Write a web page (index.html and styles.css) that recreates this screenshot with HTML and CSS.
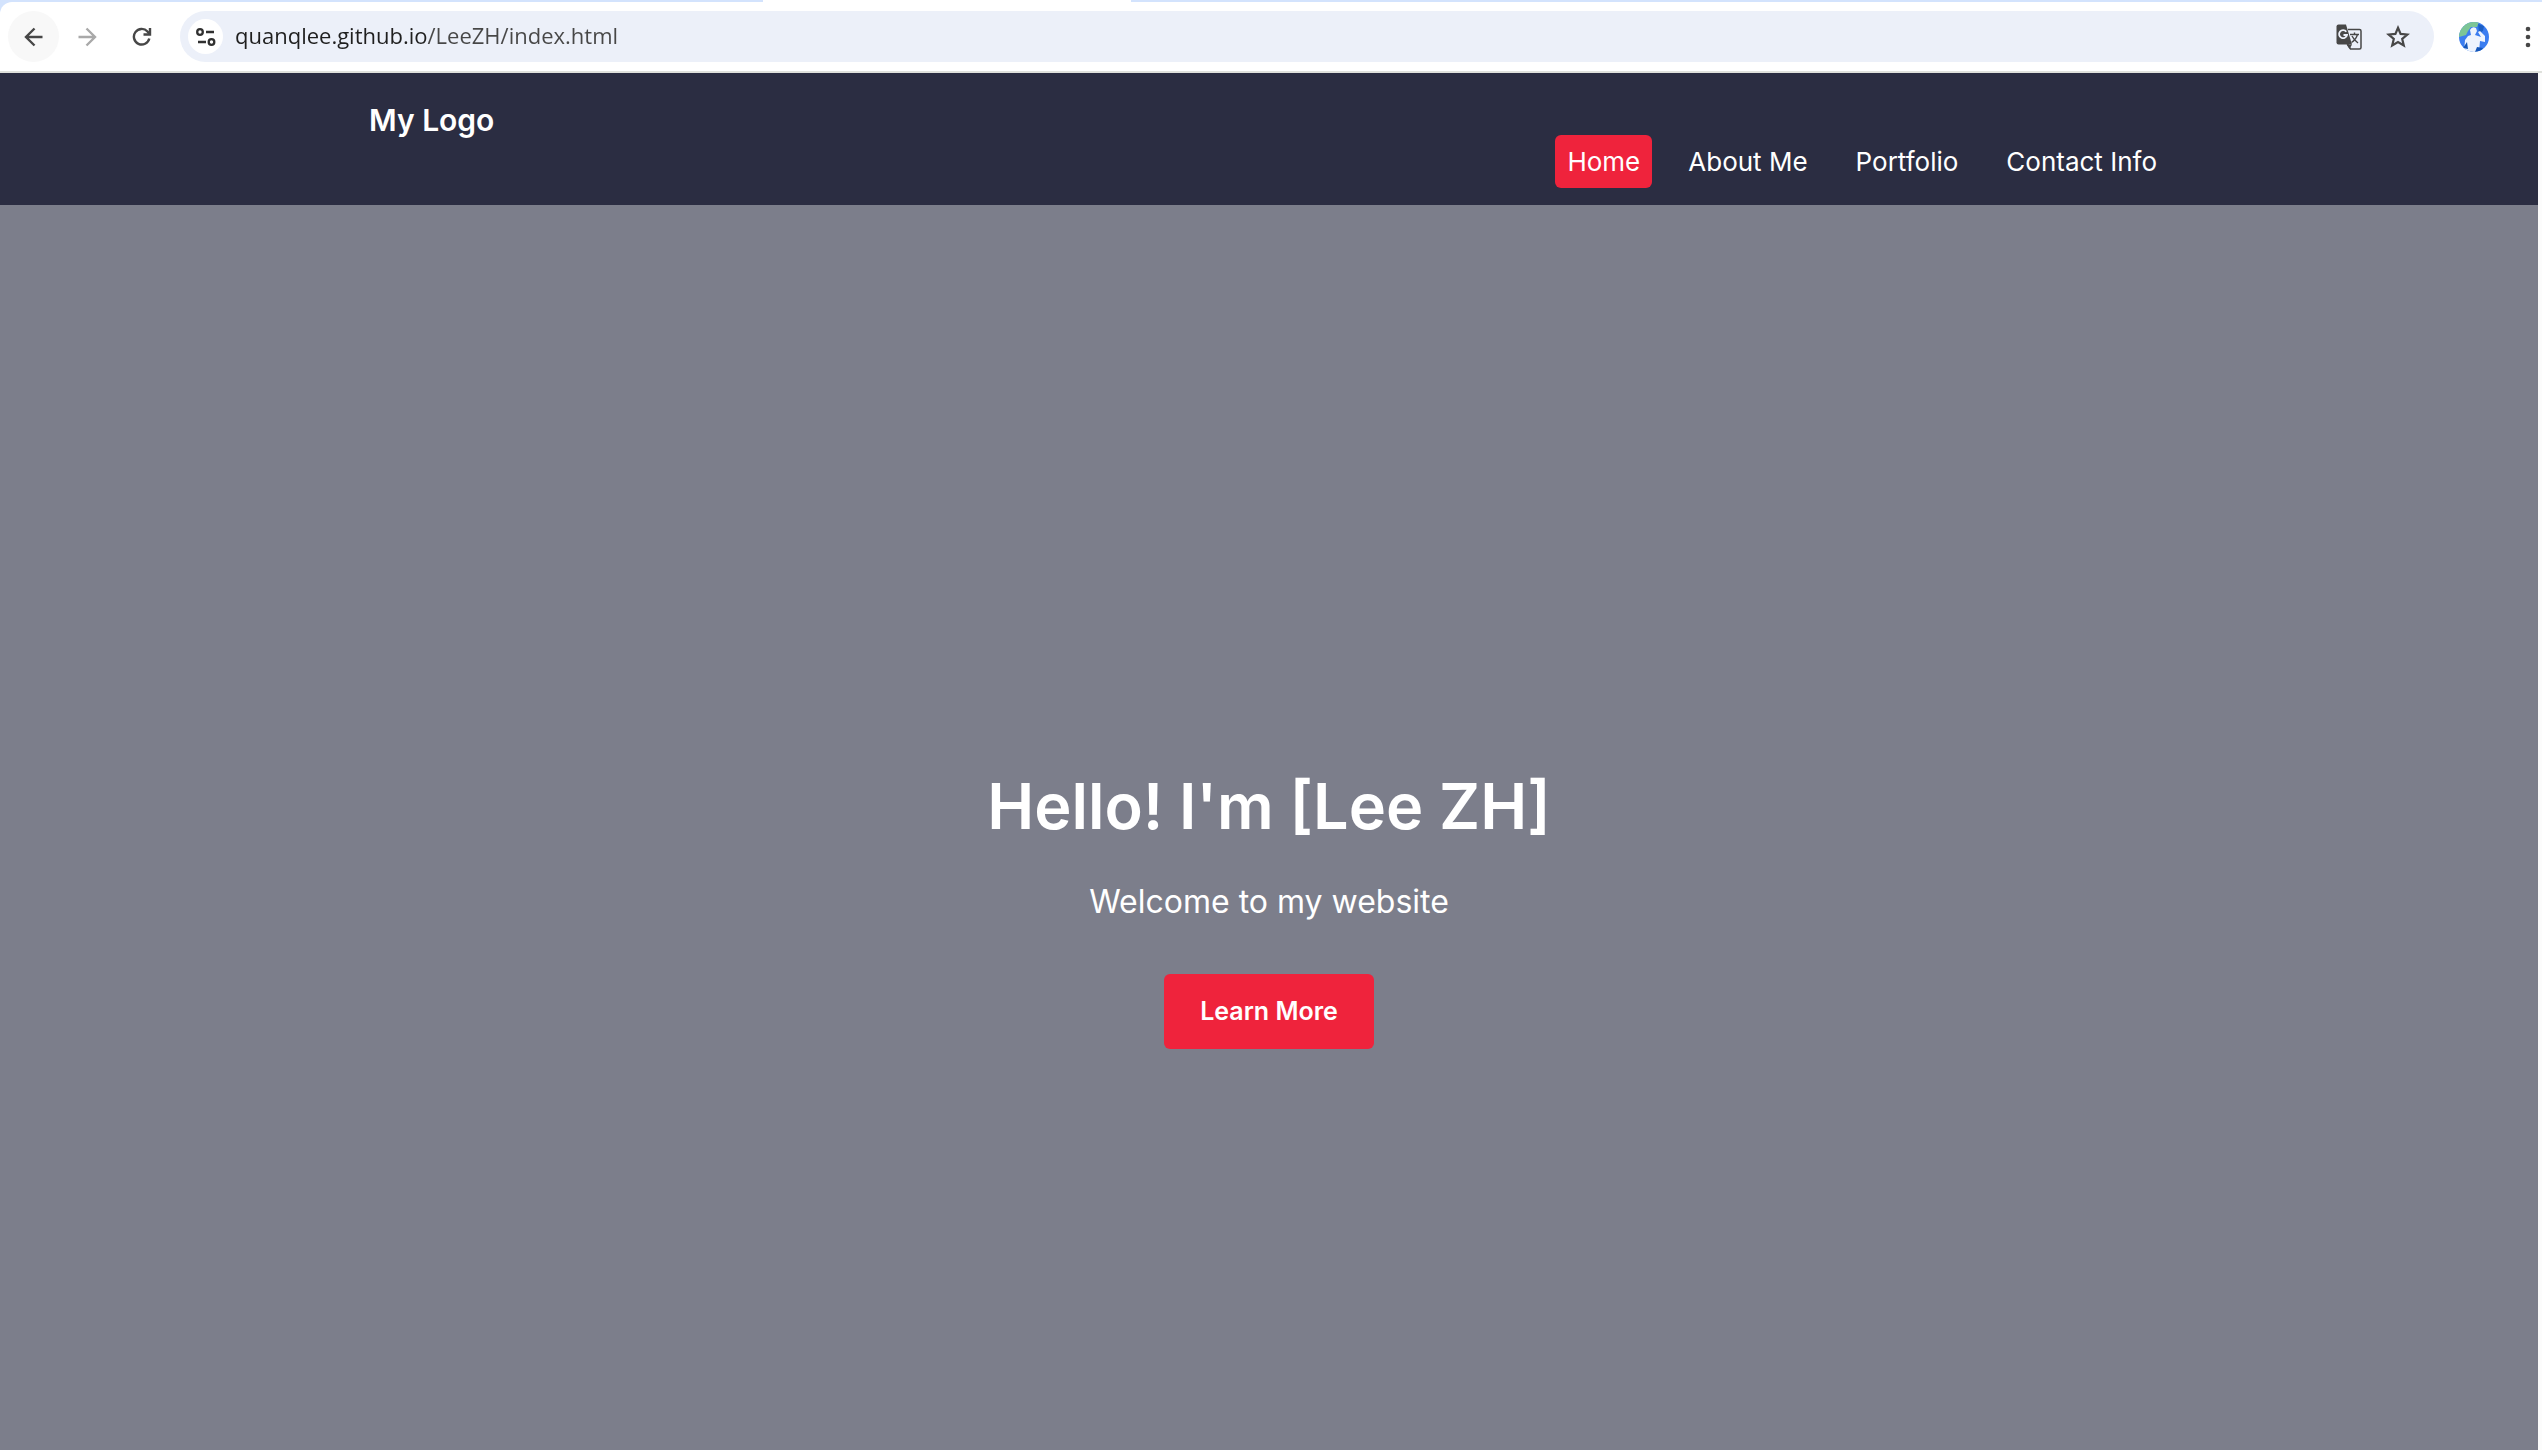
FILE: index.html
```html
<!DOCTYPE html>
<html lang="en">
<head>
<meta charset="utf-8">
<meta name="viewport" content="width=device-width, initial-scale=1">
<title>My Logo</title>
<link rel="stylesheet" href="styles.css">
</head>
<body>
<div class="browser">
  <div class="tab-strip"><span class="tab-active"></span></div>
  <div class="toolbar">
    <div class="history">
      <button class="tool tool-hover" type="button" aria-label="Back">
        <svg width="20" height="20" viewBox="0 0 20 20" fill="none" stroke="#474747" stroke-width="2.4"><path d="M18.500 10H2.500M10.500 1.500L2 10L10.500 18.500"/></svg>
      </button>
      <button class="tool" type="button" aria-label="Forward" disabled>
        <svg width="20" height="20" viewBox="0 0 20 20" fill="none" stroke="#a9a9a9" stroke-width="2.4"><path d="M.5 10H16.500M8.500 1.500L17 10L8.500 18.500"/></svg>
      </button>
      <button class="tool" type="button" aria-label="Reload">
        <svg width="20" height="20" viewBox="0 0 20 20" fill="none" stroke="#474747" stroke-width="2.4"><path d="M17.300 11.500A7.800 7.800 0 1 1 15.500 4.500L17.500 7"/><path d="M18 1V7.500H11.500"/></svg>
      </button>
    </div>
    <div class="address">
      <button class="site-info" type="button" aria-label="Site information">
        <svg width="20" height="18" viewBox="0 0 20 18" fill="none" stroke="#303030" stroke-width="2.300"><circle cx="4" cy="4" r="2.800"/><path d="M10 4H18M2 14H10"/><circle cx="15.500" cy="14" r="2.800"/></svg>
      </button>
      <input class="url" type="text" aria-label="Address" value="quanqlee.github.io/LeeZH/index.html" spellcheck="false">
      <button class="small-tool" type="button" aria-label="Translate this page">
        <svg width="26" height="26" viewBox="0 0 26 26"><path d="M12 5.500H23.500Q25 5.500 25 7V23.500Q25 25 23.500 25H14.500L11.500 20" fill="none" stroke="#474747" stroke-width="1.500"/><path d="M2.500 .5H10L16 20.500H2.500Q.5 20.500 .5 18.500V2.500Q.5 .5 2.500 .5Z" fill="#474747"/><path d="M10.500 20.500H16L13.500 25Z" fill="#474747"/><path d="M10.300 7.800A4 4 0 1 0 11 11H7.500" fill="none" stroke="#ecf0f9" stroke-width="1.800"/><path d="M14 10.500H23M18.500 8.500V10.500M21.500 10.500Q20 15.500 15.500 18.500M16 12Q18 16 22 19" fill="none" stroke="#474747" stroke-width="1.400"/></svg>
      </button>
      <button class="small-tool" type="button" aria-label="Bookmark this page">
        <svg width="24" height="24" viewBox="0 0 24 24" fill="none" stroke="#474747" stroke-width="2.200"><path d="M12 2.800L14.600 8.900L21.300 9.500L16.200 13.900L17.800 20.500L12 17L6.200 20.500L7.800 13.900L2.700 9.500L9.400 8.900Z"/></svg>
      </button>
    </div>
    <button class="profile" type="button" aria-label="Profile">
      <svg width="30" height="30" viewBox="0 0 30 30"><defs><clipPath id="disc"><circle cx="15" cy="15" r="15"/></clipPath></defs><g clip-path="url(#disc)"><path d="M0 0H30V30H0Z" fill="#3b7df0"/><path d="M0 0H20L18 5L12 5L9 9L7 13L0 15Z" fill="#7cc596"/><path d="M19 2L25 4L24 9L20 11Z" fill="#1d5fc5"/><path d="M5 30L6 18L9 14L12 13L11 8Q13 4 17 6L18 9L16 13L19 14L22 15L19 10L21 9L26 14L26 20L21 19L20 30Z" fill="#edf3fd"/><path d="M8 20L9 27L4 26ZM16 30L18 25L24 26L21 30Z" fill="#1456b9"/></g></svg>
    </button>
    <button class="more" type="button" aria-label="Menu">
      <svg width="6" height="22" viewBox="0 0 6 22" fill="#474747"><circle cx="3" cy="3" r="2.300"/><circle cx="3" cy="11" r="2.300"/><circle cx="3" cy="19" r="2.300"/></svg>
    </button>
  </div>
</div>
<div class="page">
  <header class="site-header">
    <div class="container">
      <div class="logo">My Logo</div>
      <nav>
        <ul class="menu">
          <li><a class="link active" href="#home">Home</a></li>
          <li><a class="link" href="#about">About Me</a></li>
          <li><a class="link" href="#portfolio">Portfolio</a></li>
          <li><a class="link" href="#contact">Contact Info</a></li>
        </ul>
      </nav>
    </div>
  </header>
  <main class="hero" id="home">
    <h1 class="title">Hello! I'm [Lee ZH]</h1>
    <p class="intro">Welcome to my website</p>
    <a class="cta" href="#about">Learn More</a>
  </main>
</div>
</body>
</html>
```
FILE: styles.css
```css
* { box-sizing: border-box; }
body {
  margin: 0;
  min-height: 100vh;
  display: flex;
  flex-direction: column;
  background: #fcfcfc;
  color: #fff;
  font-family: Inter, sans-serif;
}
svg { display: block; }
button {
  display: flex;
  align-items: center;
  justify-content: center;
  flex: none;
  padding: 0;
  border: 0;
  background: none;
}

/* Browser bar */
.browser {
  background: #d3e3fd;
  border-bottom: 2px solid #dfe1dc;
}
.tab-strip { height: 2px; padding-left: 30%; }
.tab-active {
  display: block;
  width: 368px;
  height: 2px;
  background: #fff;
}
.toolbar {
  display: flex;
  align-items: center;
  padding: 9px 11px 9px 8px;
  background: #fff;
  border-radius: 12px 0 0 0;
}
.history { display: flex; gap: 3px; }
.tool { width: 51px; height: 51px; border-radius: 50%; }
.tool-hover { background: #f8f8f8; }
.address {
  flex: 1;
  display: flex;
  align-items: center;
  gap: 24px;
  height: 51px;
  margin-left: 13px;
  padding: 0 24px 0 8px;
  border-radius: 26px;
  background: #ecf0f9;
}
.site-info {
  width: 35px;
  height: 35px;
  border-radius: 50%;
  background: #fff;
}
.url {
  flex: 1;
  min-width: 0;
  height: 40px;
  margin-left: -12px;
  padding: 0 0 3px;
  border: 0;
  outline: 0;
  font: 22px/36px "Open Sans", sans-serif;
  color: transparent;
  background: linear-gradient(90deg, #1f1f1f 192px, #474747 192px);
  -webkit-background-clip: text;
  background-clip: text;
}
.profile { margin-left: 25px; }
.more { margin-left: 36px; }

/* Site */
.page {
  flex: 1;
  display: flex;
  flex-direction: column;
  margin-right: 4px;
}
.site-header { background: #2b2d42; }
.container {
  display: flex;
  justify-content: space-between;
  height: 132px;
  max-width: 1800px;
  margin: 0 auto;
}
.logo { padding-top: 29px; font-size: 30px; line-height: 36px; font-weight: 600; }
.menu {
  display: flex;
  gap: 24px;
  margin: 0;
  padding: 62px 0 0;
  list-style: none;
}
.link {
  display: block;
  padding: 12px;
  border-radius: 6px;
  color: #fff;
  font-size: 26px;
  line-height: 29px;
  text-decoration: none;
}
.active { background: #ef233c; }
.hero {
  flex: 1;
  display: flex;
  flex-direction: column;
  align-items: center;
  justify-content: center;
  padding-top: 164px;
  background: #7c7e8b;
}
.title { margin: 0 0 36px; font-size: 63px; line-height: 72px; font-weight: 600; }
.intro { margin: 0 0 48px; font-size: 32px; line-height: 48px; }
.cta {
  padding: 19px 36px;
  border-radius: 6px;
  background: #ef233c;
  color: #fff;
  font-size: 25px;
  line-height: 37px;
  font-weight: 600;
  text-decoration: none;
}
```
